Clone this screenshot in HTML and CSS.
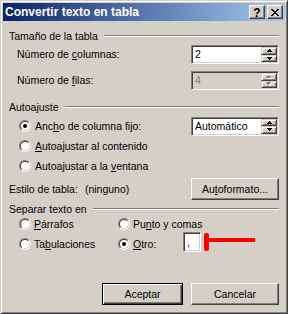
FILE: index.html
```html
<!DOCTYPE html>
<html lang="es">
<head>
<meta charset="utf-8">
<title>Convertir texto en tabla</title>
<link rel="stylesheet" href="styles.css">
</head>
<body>
<div class="window">
  <div class="titlebar">
    <span class="title">Convertir texto en tabla</span>
    <span class="cap-btn help">?</span>
    <span class="cap-btn close">
      <svg width="8" height="7" viewBox="0 0 8 7" shape-rendering="crispEdges"><path d="M0 0h2v1H0zM6 0h2v1H6zM1 1h2v1H1zM5 1h2v1H5zM2 2h4v1H2zM3 3h2v1H3zM2 4h4v1H2zM1 5h2v1H1zM5 5h2v1H5zM0 6h2v1H0zM6 6h2v1H6z"/></svg>
    </span>
  </div>

  <div class="content">
    <section class="group g-size">
      <div class="group-title"><span>Tamaño de la tabla</span><i class="rule"></i></div>
      <div class="field-row">
        <span class="label">Número de <u>c</u>olumnas:</span>
        <div class="field spin">
          <span class="value">2</span>
          <span class="spin-btns">
            <span class="spin-btn"><svg width="5" height="3" viewBox="0 0 5 3" shape-rendering="crispEdges"><path d="M2 0h1v1h1v1h1v1H0V2h1V1h1z"/></svg></span>
            <span class="spin-btn"><svg width="5" height="3" viewBox="0 0 5 3" shape-rendering="crispEdges"><path d="M0 0h5v1H4v1H3v1H2V2H1V1H0z"/></svg></span>
          </span>
        </div>
      </div>
      <div class="field-row">
        <span class="label">Número de <u>f</u>ilas:</span>
        <div class="field spin disabled">
          <span class="value">4</span>
          <span class="spin-btns">
            <span class="spin-btn"><svg width="6" height="4" viewBox="0 0 6 4" shape-rendering="crispEdges"><path fill="#fff" d="M3 1h1v1h1v1h1v1H1V3h1V2h1z"/><path fill="#808080" d="M2 0h1v1h1v1h1v1H0V2h1V1h1z"/></svg></span>
            <span class="spin-btn"><svg width="6" height="4" viewBox="0 0 6 4" shape-rendering="crispEdges"><path fill="#fff" d="M1 1h5v1H5v1H4v1H3V3H2V2H1z"/><path fill="#808080" d="M0 0h5v1H4v1H3v1H2V2H1V1H0z"/></svg></span>
          </span>
        </div>
      </div>
    </section>

    <section class="group g-fit">
      <div class="group-title"><span>Autoajuste</span><i class="rule"></i></div>
      <div class="radio-row first">
        <span class="radio"><span class="radio-inner"><span class="dot"></span></span></span>
        <span class="label grow">Anc<u>h</u>o de columna fijo:</span>
        <div class="field spin">
          <span class="value">Automático</span>
          <span class="spin-btns">
            <span class="spin-btn"><svg width="5" height="3" viewBox="0 0 5 3" shape-rendering="crispEdges"><path d="M2 0h1v1h1v1h1v1H0V2h1V1h1z"/></svg></span>
            <span class="spin-btn"><svg width="5" height="3" viewBox="0 0 5 3" shape-rendering="crispEdges"><path d="M0 0h5v1H4v1H3v1H2V2H1V1H0z"/></svg></span>
          </span>
        </div>
      </div>
      <div class="radio-row">
        <span class="radio"><span class="radio-inner"></span></span>
        <span class="label"><u>A</u>utoajustar al contenido</span>
      </div>
      <div class="radio-row">
        <span class="radio"><span class="radio-inner"></span></span>
        <span class="label">Autoajustar a la <u>v</u>entana</span>
      </div>
    </section>

    <div class="style-row">
      <span class="label">Estilo de tabla:<span class="style-name">(ninguno)</span></span>
      <span class="btn wide">Au<u>t</u>oformato...</span>
    </div>

    <section class="group g-split">
      <div class="group-title"><span>Separar texto en</span><i class="rule"></i></div>
      <div class="split">
        <div class="opt">
          <span class="radio"><span class="radio-inner"></span></span>
          <span class="label"><u>P</u>árrafos</span>
        </div>
        <div class="opt">
          <span class="radio"><span class="radio-inner"></span></span>
          <span class="label">Pu<u>n</u>to y comas</span>
        </div>
        <div class="opt">
          <span class="radio"><span class="radio-inner"></span></span>
          <span class="label">Ta<u>b</u>ulaciones</span>
        </div>
        <div class="opt">
          <span class="radio"><span class="radio-inner"><span class="dot"></span></span></span>
          <span class="label otro-label"><u>O</u>tro:</span>
          <span class="otro-field">
            <span class="field small"><span class="value">,</span></span>
            <svg class="marker" width="51" height="18" viewBox="0 0 51 18"><rect x="0" y="0" width="5" height="18" rx="2" fill="#f00"/><rect x="4" y="5" width="47" height="4" fill="#f00"/></svg>
          </span>
        </div>
      </div>
    </section>

    <div class="footer">
      <span class="btn default">Aceptar</span>
      <span class="btn wide">Cancelar</span>
    </div>
  </div>
</div>
</body>
</html>
```

FILE: styles.css
```css
* {
  box-sizing: border-box;
}

html, body {
  margin: 0;
  padding: 0;
}

body {
  background: #d4d0c8;
  color: #000;
  font-family: "Liberation Sans", Arial, sans-serif;
  font-size: 10.5px;
  line-height: 13px;
}

u {
  text-decoration: underline;
  text-underline-offset: 1px;
}

.window {
  width: 288px;
  height: 314px;
  display: flex;
  flex-direction: column;
  padding: 2px;
  background: #d4d0c8;
  border: 1px solid;
  border-color: #d4d0c8 #404040 #404040 #d4d0c8;
  box-shadow: inset 1px 1px #fff, inset -1px -1px #808080;
}

/* title bar */
.titlebar {
  flex: none;
  height: 18px;
  display: flex;
  align-items: center;
  padding: 0 2px;
  background: linear-gradient(to right, #0a246a, #a6caf0);
}

.title {
  flex: 1;
  color: #fff;
  font-weight: bold;
  font-size: 12px;
  line-height: 14px;
  white-space: nowrap;
}

.cap-btn {
  width: 16px;
  height: 14px;
  display: flex;
  align-items: center;
  justify-content: center;
  background: #d4d0c8;
  border: 1px solid;
  border-color: #fff #404040 #404040 #fff;
  box-shadow: inset -1px -1px #808080;
}

.help {
  font-weight: bold;
  font-size: 12px;
  line-height: 12px;
  padding-top: 1px;
}

.close {
  margin-left: 2px;
  padding-top: 1px;
}

/* content */
.content {
  flex: 1;
  display: flex;
  flex-direction: column;
  padding: 0 6px 6px;
}

.group-title {
  height: 12px;
  line-height: 12px;
  display: flex;
  align-items: center;
  white-space: nowrap;
}

.rule {
  flex: 1;
  height: 2px;
  margin-left: 6px;
  border-top: 1px solid #808080;
  border-bottom: 1px solid #fff;
}

.g-size {
  margin-top: 9px;
}

.g-fit {
  margin-top: 11px;
}

.g-split {
  margin-top: 3px;
}

.field-row {
  height: 19px;
  display: flex;
  align-items: center;
  justify-content: space-between;
  padding-left: 8px;
  margin-top: 3px;
}

.field-row + .field-row {
  margin-top: 7px;
}

.label {
  white-space: nowrap;
}

.grow {
  flex: 1;
}

/* sunken fields */
.field {
  display: flex;
  background: #fff;
  border: 1px solid;
  border-color: #808080 #fff #fff #808080;
  box-shadow: inset 1px 1px #404040, inset -1px -1px #d4d0c8;
  padding: 1px;
}

.spin {
  width: 88px;
  height: 19px;
  flex: none;
}

.value {
  flex: 1;
  padding-left: 2px;
  line-height: 15px;
  white-space: nowrap;
}

.spin.disabled {
  background: #d4d0c8;
  color: #808080;
}

.spin-btns {
  width: 16px;
  display: flex;
  flex-direction: column;
}

.spin-btn {
  flex: 1;
  display: flex;
  align-items: center;
  justify-content: center;
  background: #d4d0c8;
  border: 1px solid;
  border-color: #d4d0c8 #404040 #404040 #d4d0c8;
  box-shadow: inset 1px 1px #fff, inset -1px -1px #808080;
}

.spin-btn svg {
  display: block;
}

/* radios */
.radio-row {
  height: 20px;
  display: flex;
  align-items: center;
  gap: 4px;
  padding-left: 10px;
}

.radio-row.first {
  margin-top: 3px;
}

.radio {
  flex: none;
  width: 12px;
  height: 12px;
  display: flex;
  border-radius: 50%;
  border: 1px solid;
  border-color: #808080 #fff #fff #808080;
}

.radio-inner {
  flex: 1;
  display: flex;
  align-items: center;
  justify-content: center;
  border-radius: 50%;
  background: #fff;
  border: 1px solid;
  border-color: #404040 #d4d0c8 #d4d0c8 #404040;
}

.dot {
  width: 4px;
  height: 4px;
  border-radius: 50%;
  background: #000;
}

/* style row */
.style-row {
  height: 22px;
  margin-top: 2px;
  display: flex;
  align-items: center;
  justify-content: space-between;
}

.style-name {
  margin-left: 7px;
}

/* buttons */
.btn {
  height: 22px;
  display: flex;
  align-items: center;
  justify-content: center;
  background: #d4d0c8;
  border: 1px solid;
  border-color: #fff #404040 #404040 #fff;
  box-shadow: inset -1px -1px #808080;
  white-space: nowrap;
}

.btn.wide {
  width: 88px;
}

.btn.default {
  width: 81px;
  border-color: #000;
  box-shadow: inset 1px 1px #fff, inset -1px -1px #404040, inset -2px -2px #808080;
}

/* split group */
.split {
  display: grid;
  grid-template-columns: 99px 1fr;
  grid-auto-rows: 18px;
  row-gap: 2px;
  padding-left: 10px;
}

.opt {
  display: flex;
  align-items: center;
  gap: 3px;
}

.otro-label {
  width: 47px;
}

.otro-field {
  display: flex;
  align-items: center;
  gap: 3px;
  margin-bottom: 4px;
}

.field.small {
  width: 18px;
  height: 20px;
}

.field.small .value {
  line-height: 16px;
}

.marker {
  display: block;
}

/* footer */
.footer {
  margin-top: auto;
  display: flex;
  justify-content: flex-end;
  gap: 8px;
}
```
